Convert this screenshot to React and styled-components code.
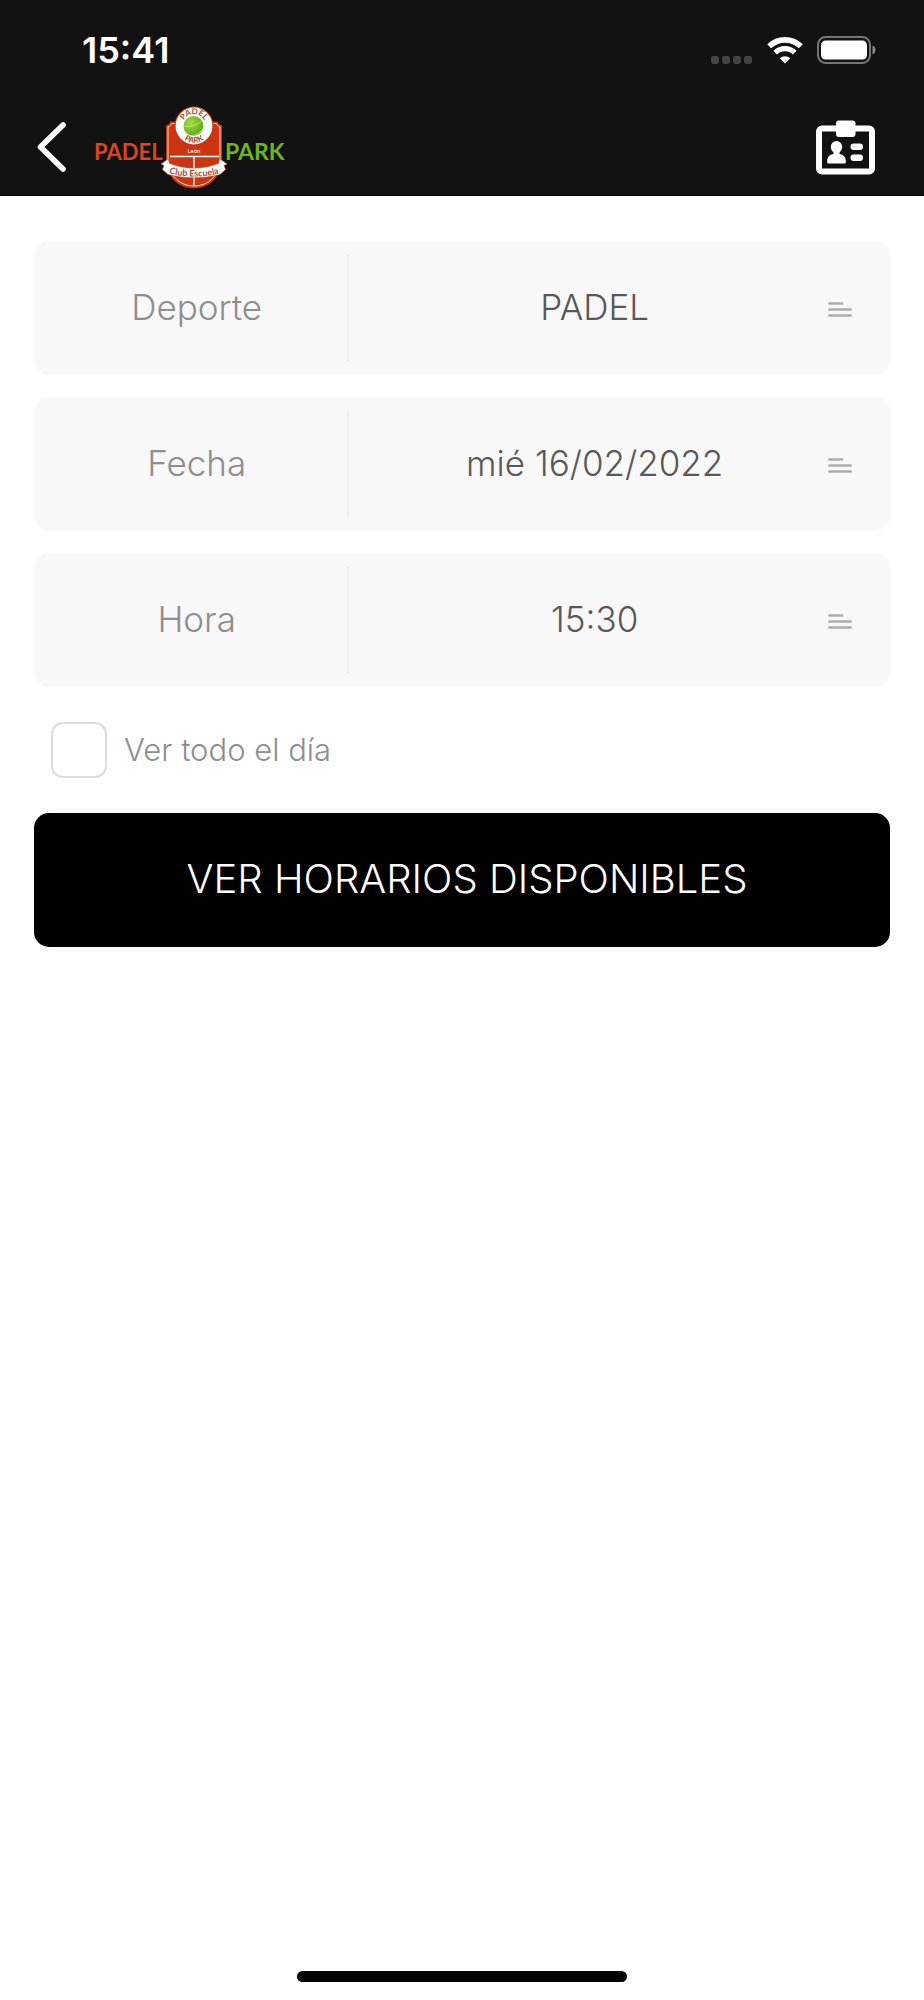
import React from "react";
import styled, { createGlobalStyle } from "styled-components";

const GlobalStyle = createGlobalStyle`
  *, *::before, *::after { box-sizing: border-box; }
  body {
    margin: 0;
    background: #fff;
    font-family: Inter, "Open Sans", sans-serif;
    font-weight: 300;
  }
`;

const Screen = styled.div`
  display: flex;
  flex-direction: column;
  min-height: 100vh;
`;

const Header = styled.header`
  background: #121212;
  border-bottom: 1px solid #000;
`;

const StatusBar = styled.div`
  display: flex;
  align-items: center;
  justify-content: space-between;
  height: 100px;
  padding: 0 48px 0 82px;
`;

const Clock = styled.time`
  color: #fff;
  font-size: 36px;
  font-weight: 600;
  line-height: 40px;
`;

const StatusIcons = styled.div`
  display: flex;
  align-items: flex-end;
  gap: 14px;
`;

const NavBar = styled.nav`
  display: flex;
  align-items: center;
  height: 95px;
  padding: 0 44px 0 30px;
`;

const IconButton = styled.button`
  display: flex;
  padding: 0 0 2px;
  border: 0;
  background: none;
  cursor: pointer;
`;

const Logo = styled.svg`
  display: block;
  margin: 0 auto 0 16px;
`;

const Form = styled.form`
  display: flex;
  flex-direction: column;
  gap: 22px;
  padding: 45px 34px;
`;

const Field = styled.div`
  position: relative;
  display: grid;
  grid-template-columns: 7fr 12fr;
  height: 134px;
  padding: 13px 0;
  border-radius: 15px;
  background: #f8f8f8;
`;

const FieldLabel = styled.label`
  display: flex;
  align-items: center;
  justify-content: center;
  padding: 0 0 2px 12px;
  border-right: 2px solid #efefef;
  color: #8e8e8e;
  font-size: 35px;
`;

const FieldSelect = styled.select`
  width: 100%;
  min-width: 0;
  padding: 0 50px 2px 0;
  border: 0;
  appearance: none;
  background: none;
  color: #585858;
  font: inherit;
  font-size: 35px;
  text-align: center;
  text-align-last: center;
`;

const MenuMark = styled.svg`
  position: absolute;
  top: 60px;
  right: 38px;
  pointer-events: none;
`;

const CheckRow = styled.label`
  display: flex;
  align-items: center;
  gap: 17px;
  margin: 13px 0;
  padding-left: 17px;
  color: #8e8e8e;
  font-size: 31px;
`;

const CheckText = styled.span`
  padding-bottom: 2px;
`;

const Checkbox = styled.input`
  appearance: none;
  width: 56px;
  height: 56px;
  margin: 0;
  border: 2px solid #dcdcdc;
  border-radius: 12px;
  background: #fff;

  &:checked { background: #929292; }
`;

const SubmitButton = styled.button`
  height: 134px;
  padding: 0 0 4px 10px;
  border: 0;
  border-radius: 15px;
  background: #000;
  color: #fff;
  font: inherit;
  font-size: 40px;
  cursor: pointer;
`;

const HomeArea = styled.footer`
  display: flex;
  justify-content: center;
  margin-top: auto;
  padding-bottom: 18px;
`;

const HomeIndicator = styled.div`
  width: 330px;
  height: 11px;
  border-radius: 6px;
  background: #000;
`;

function SignalDots() {
  return (
    <svg width="42" height="28" viewBox="0 0 42 28" fill="#444" aria-hidden="true">
      {[0, 11, 22, 33].map((x) => (
        <rect key={x} x={x} y="20" width="8" height="8" rx="2.4" />
      ))}
    </svg>
  );
}

function WifiIcon() {
  return (
    <svg width="36" height="28" viewBox="0 0 36 28" fill="none" stroke="#fff" aria-hidden="true">
      <path d="M2.2 10.3a22.6 22.6 0 0 1 31.6 0" strokeWidth="5.6" />
      <path d="M8.2 16.7a14 14 0 0 1 19.6 0" strokeWidth="5.2" />
      <path d="M18 27.5l-5.2-5.2a7.6 7.6 0 0 1 10.4 0z" fill="#fff" stroke="none" />
    </svg>
  );
}

function BatteryIcon() {
  return (
    <svg width="59" height="28" viewBox="0 0 59 28" aria-hidden="true">
      <rect x="1" y="1" width="52" height="26" rx="7.5" fill="none" stroke="#757575" strokeWidth="2" />
      <rect x="4" y="4.6" width="46" height="19" rx="4.5" fill="#fff" />
      <path d="M55.5 9.6c4 1.4 4 7.4 0 8.8z" fill="#8a8a8a" />
    </svg>
  );
}

function BackIcon() {
  return (
    <svg width="44" height="60" viewBox="0 0 44 60" fill="none" stroke="#fff" strokeWidth="5.6" strokeLinecap="round" strokeLinejoin="round" aria-hidden="true">
      <path d="M33 8L10.500 30L33 52" />
    </svg>
  );
}

function BadgeIcon() {
  return (
    <svg width="68" height="60" viewBox="0 0 68 60" fill="#fff" aria-hidden="true">
      <rect x="7" y="11.500" width="53" height="43" rx="3" fill="none" stroke="#fff" strokeWidth="6" />
      <rect x="24" y="3.500" width="19.500" height="16.500" rx="3" />
      <path d="M24.500 24a5.700 5.700 0 0 1 5.700 5.800c0 2.300-1.200 4.400-2.700 5.700v1.500c3.500.5 6.300 3 6.300 6.700v1.500c0 .8-.5 1.300-1.300 1.300h-16c-.8 0-1.300-.5-1.300-1.300v-1.500c0-3.700 2.800-6.200 6.300-6.700v-1.500c-1.500-1.300-2.700-3.400-2.700-5.700a5.700 5.700 0 0 1 5.700-5.800z" />
      <rect x="38.500" y="26.500" width="12.500" height="6.500" rx="3.200" />
      <rect x="38.500" y="37.500" width="12.500" height="6.500" rx="3.200" />
    </svg>
  );
}

function ClubLogo() {
  return (
    <Logo width="200" height="88" viewBox="90 104 200 88" role="img" aria-label="Padel Park León Club Escuela">
      <defs>
        <radialGradient id="ball" cx="0.35" cy="0.35" r="0.7">
          <stop offset="0" stopColor="#a4dc3c" />
          <stop offset="1" stopColor="#5aa816" />
        </radialGradient>
        <path id="badgeTop" d="M182.200 126a11.800 11.800 0 0 1 23.600 0" />
        <path id="badgeBottom" d="M177.200 126a16.800 16.800 0 0 0 33.600 0" />
        <path id="ribbonLine" d="M163 172Q194 181 225 172" />
      </defs>
      <g fontFamily="Lato, sans-serif" fontWeight="700">
        <text x="94" y="160" fontSize="22" fill="#d8451f">PADEL</text>
        <text x="225" y="160" fontSize="23" fill="#6db41f">PARK</text>
      </g>
      <path d="M170 121.500h48c0 2.200 1.500 3.400 4 3.500v34c0 17-12 29.500-28 29.500s-28-12.500-28-29.500v-34c2.500-.1 4-1.300 4-3.500z" fill="#cb3512" />
      <path d="M171.500 123.500h45c.3 1.800 1.600 3 3.500 3.300v31.700c0 16-11 27.500-26 27.500s-26-11.500-26-27.500v-31.700c1.900-.3 3.200-1.500 3.500-3.300z" fill="none" stroke="#f4ddd5" strokeWidth="1" />
      <path d="M170 156.500h49M194 156.500v29" stroke="#fff" strokeWidth="1.300" />
      <circle cx="194" cy="126" r="19.500" fill="#cb3512" />
      <circle cx="194" cy="126" r="18.400" fill="#fff" />
      <circle cx="193.500" cy="126" r="10" fill="url(#ball)" />
      <path d="M184.500 126.500c6 .5 14-1.500 17.300-6.300M192 135.500c5-.5 9-3 11-7" fill="none" stroke="#c9ec8a" strokeWidth="0.800" />
      <g fontFamily="Lato, sans-serif" fontWeight="700" textAnchor="middle">
        <text fontSize="8" fill="#a94a35">
          <textPath href="#badgeTop" startOffset="50%">PADEL</textPath>
        </text>
        <text fontSize="8" fill="#a94a35">
          <textPath href="#badgeBottom" startOffset="50%">PARK</textPath>
        </text>
        <text x="194" y="153" fontSize="6" fontWeight="400" fill="#fff">León</text>
      </g>
      <path d="M161 164l7-5 1.500 4.500Q194 173 218.500 163.500l1.500-4.500 7 5-3 1.500 1.500 4-5.500 5Q194 181 168 174.500l-5.500-5 1.500-4z" fill="#fff" stroke="#c9583c" strokeWidth="0.500" />
      <text fontFamily="Lato, sans-serif" fontSize="9" fontWeight="700" fill="#b0452c" textAnchor="middle">
        <textPath href="#ribbonLine" startOffset="50%">Club Escuela</textPath>
      </text>
    </Logo>
  );
}

function SelectField({ id, label, value }) {
  return (
    <Field>
      <FieldLabel htmlFor={id}>{label}</FieldLabel>
      <FieldSelect id={id} defaultValue={value}>
        <option value={value}>{value}</option>
      </FieldSelect>
      <MenuMark width="24" height="16" viewBox="0 0 24 16" stroke="#adadad" strokeWidth="2.400" strokeLinecap="round" aria-hidden="true">
        <path d="M1.200 2.500h13M1.200 8.500h21.600M1.200 14.500h21.600" />
      </MenuMark>
    </Field>
  );
}

const FIELDS = [
  { id: "deporte", label: "Deporte", value: "PADEL" },
  { id: "fecha", label: "Fecha", value: "mié 16/02/2022" },
  { id: "hora", label: "Hora", value: "15:30" },
];

export default function App() {
  return (
    <Screen>
      <GlobalStyle />
      <Header>
        <StatusBar>
          <Clock>15:41</Clock>
          <StatusIcons>
            <SignalDots />
            <WifiIcon />
            <BatteryIcon />
          </StatusIcons>
        </StatusBar>
        <NavBar>
          <IconButton type="button" aria-label="Volver">
            <BackIcon />
          </IconButton>
          <ClubLogo />
          <IconButton type="button" aria-label="Carnet">
            <BadgeIcon />
          </IconButton>
        </NavBar>
      </Header>
      <Form onSubmit={(event) => event.preventDefault()}>
        {FIELDS.map((field) => (
          <SelectField key={field.id} {...field} />
        ))}
        <CheckRow>
          <Checkbox type="checkbox" name="todo-el-dia" />
          <CheckText>Ver todo el día</CheckText>
        </CheckRow>
        <SubmitButton type="submit">VER HORARIOS DISPONIBLES</SubmitButton>
      </Form>
      <HomeArea>
        <HomeIndicator />
      </HomeArea>
    </Screen>
  );
}
